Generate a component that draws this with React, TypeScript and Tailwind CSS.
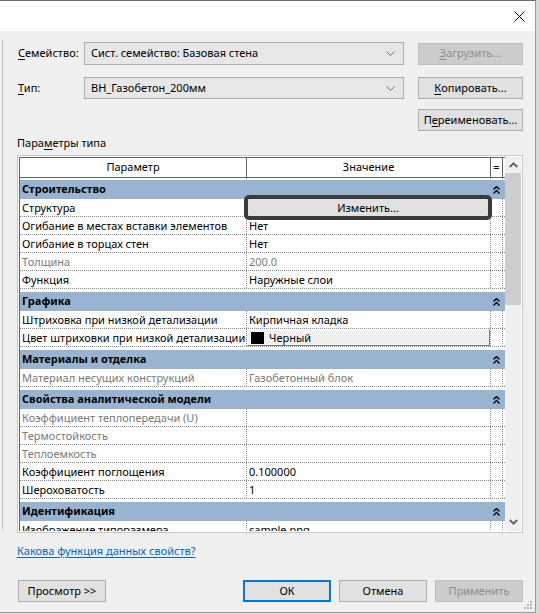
import React from "react";

type Row = { name: string; value?: string; muted?: boolean; kind?: "edit" | "color" };
type Section = { title: string; rows: Row[] };

const sections: Section[] = [
  {
    title: "Строительство",
    rows: [
      { name: "Структура", kind: "edit" },
      { name: "Огибание в местах вставки элементов", value: "Нет" },
      { name: "Огибание в торцах стен", value: "Нет" },
      { name: "Толщина", value: "200.0", muted: true },
      { name: "Функция", value: "Наружные слои" },
    ],
  },
  {
    title: "Графика",
    rows: [
      { name: "Штриховка при низкой детализации", value: "Кирпичная кладка" },
      { name: "Цвет штриховки при низкой детализации", value: "Черный", kind: "color" },
    ],
  },
  {
    title: "Материалы и отделка",
    rows: [{ name: "Материал несущих конструкций", value: "Газобетонный блок", muted: true }],
  },
  {
    title: "Свойства аналитической модели",
    rows: [
      { name: "Коэффициент теплопередачи (U)", muted: true },
      { name: "Термостойкость", muted: true },
      { name: "Теплоемкость", muted: true },
      { name: "Коэффициент поглощения", value: "0.100000" },
      { name: "Шероховатость", value: "1" },
    ],
  },
  {
    title: "Идентификация",
    rows: [
      { name: "Изображение типоразмера", value: "sample.png" },
      { name: "Комментарии к типоразмеру", value: "" },
    ],
  },
];

function ChevronDown() {
  return (
    <svg width="9" height="5" viewBox="0 0 9 5">
      <path d="M0.5 0.5 L4.5 4.5 L8.5 0.5" fill="none" stroke="#6a6a6a" strokeWidth="1" />
    </svg>
  );
}

function CollapseIcon() {
  return (
    <svg width="7" height="8" viewBox="0 0 7 8">
      <path d="M0.5 3.5 L3.5 0.5 L6.5 3.5" fill="none" stroke="#000" strokeWidth="1.4" />
      <path d="M0.5 7.5 L3.5 4.5 L6.5 7.5" fill="none" stroke="#000" strokeWidth="1.4" />
    </svg>
  );
}

function ScrollArrow({ up }: { up?: boolean }) {
  return (
    <svg width="9" height="6" viewBox="0 0 9 6">
      <path
        d={up ? "M0.8 5 L4.5 1.3 L8.2 5" : "M0.8 1 L4.5 4.7 L8.2 1"}
        fill="none"
        stroke="#606060"
        strokeWidth="1.8"
      />
    </svg>
  );
}

function Button({
  children,
  className = "",
  disabled,
  primary,
}: {
  children: React.ReactNode;
  className?: string;
  disabled?: boolean;
  primary?: boolean;
}) {
  const look = disabled
    ? "bg-[#cccccc] border border-[#bfbfbf] text-[#8c8c8c]"
    : primary
      ? "bg-[#e1e1e1] border-2 border-[#0078d7]"
      : "bg-[#e1e1e1] border border-[#adadad]";
  return (
    <div className={`h-[22px] flex items-center justify-center ${look} ${className}`}>{children}</div>
  );
}

function Select({ value }: { value: string }) {
  return (
    <div className="w-[320px] h-full flex items-center justify-between pl-[6px] pr-[8px] bg-[#e7e7e7] border border-[#acacac]">
      <span>{value}</span>
      <ChevronDown />
    </div>
  );
}

function DataRow({ row }: { row: Row }) {
  const tone = row.muted ? "text-[#7a7a7a]" : "text-black";
  return (
    <div className="flex h-[18px] border-b border-dotted border-[#8a8a8a]">
      <div className={`w-[227px] pl-[2px] border-r border-dotted border-[#8a8a8a] whitespace-nowrap overflow-hidden leading-[17px] ${tone}`}>
        {row.name}
      </div>
      <div className={`relative w-[244px] border-r border-dotted border-[#8a8a8a] leading-[17px] ${tone}`}>
        {row.kind === "edit" ? (
          <div className="absolute -left-[3px] -right-[2px] -top-[4px] -bottom-[4px] z-10 rounded-[5px] border-[4px] border-[#3b3b3b] bg-[#e1e1e1] flex items-center justify-center text-black">
            Изменить...
          </div>
        ) : row.kind === "color" ? (
          <div className="h-full flex items-center gap-[5px] pl-[3px] bg-[#f0f0f0] border border-[#7c7c7c] border-t-white border-l-white">
            <div className="w-[13px] h-[12px] bg-black" />
            <span>{row.value}</span>
          </div>
        ) : (
          <div className="pl-[2px] whitespace-nowrap overflow-hidden">{row.value}</div>
        )}
      </div>
      <div className="w-[12px] border-r border-dotted border-[#8a8a8a]" />
    </div>
  );
}

function SectionHeader({ title, first }: { title: string; first?: boolean }) {
  return (
    <div
      className={`flex items-center justify-between h-[19px] w-[485px] bg-[#99b4d1] pl-[2px] pr-[5px] font-bold ${
        first ? "mt-[2px]" : "mt-[3px]"
      }`}
    >
      <span>{title}</span>
      <CollapseIcon />
    </div>
  );
}

export default function App() {
  return (
    <div className="w-[539px] h-[614px] bg-[#dadada] font-['Noto_Sans',sans-serif] text-[11px] text-black">
      <div className="relative w-[536px] h-[613px] flex flex-col bg-[#f0f0f0] border-t border-[#6d6d62] border-r border-b border-r-[#9a9a9a] border-b-[#9a9a9a]">
        {/* title bar */}
        <div className="h-[30px] bg-white flex items-center justify-end pr-[10px]">
          <svg width="11" height="11" viewBox="0 0 11 11">
            <path d="M0.5 0.5 L10.5 10.5 M10.5 0.5 L0.5 10.5" stroke="#000" strokeWidth="1" />
          </svg>
        </div>

        <div className="flex flex-1">
          <div className="w-px ml-[2px] mt-[9px] h-[491px] bg-[#c6c6c6]" />
          <div className="flex-1 flex flex-col pl-[14px] pr-[12px] pt-[11px]">
            {/* family */}
            <div className="flex items-center h-[23px]">
              <div className="w-[67px] pl-[1px]">
                <span className="underline underline-offset-2">С</span>емейство:
              </div>
              <Select value="Сист. семейство: Базовая стена" />
              <Button disabled className="ml-[14px] w-[105px]">
                <span className="underline underline-offset-2">З</span>агрузить...
              </Button>
            </div>

            {/* type */}
            <div className="flex items-center h-[22px] mt-[12px]">
              <div className="w-[67px] pl-[1px]">
                <span className="underline underline-offset-2">Т</span>ип:
              </div>
              <Select value="ВН_Газобетон_200мм" />
              <Button className="ml-[14px] w-[105px]">
                <span className="underline underline-offset-2">К</span>опировать...
              </Button>
            </div>

            <div className="flex justify-end mt-[10px]">
              <Button className="w-[105px]">
                П<span className="underline underline-offset-2">е</span>реименовать...
              </Button>
            </div>

            <div className="mt-[4px] h-[16px] leading-[16px]">
              Пара<span className="underline underline-offset-2">м</span>етры типа
            </div>

            {/* parameter grid */}
            <div className="mt-[4px] w-[506px] h-[378px] border border-[#c8c8c8] p-px bg-white flex overflow-hidden">
              <div className="w-[486px] h-full overflow-hidden border-l border-[#646464]">
                <div className="flex h-[21px] border-t border-b border-[#646464]">
                  <div className="w-[227px] border-r border-[#646464] flex items-center justify-center">Параметр</div>
                  <div className="w-[244px] border-r border-[#646464] flex items-center justify-center">Значение</div>
                  <div className="w-[12px] border-r border-[#646464] flex items-center justify-center">=</div>
                </div>
                {sections.map((s, i) => (
                  <div key={s.title}>
                    <SectionHeader title={s.title} first={i === 0} />
                    {s.rows.map((r) => (
                      <DataRow key={r.name} row={r} />
                    ))}
                  </div>
                ))}
              </div>
              <div className="w-[16px] h-full bg-[#f0f0f0] flex flex-col items-center">
                <div className="h-[16px] flex items-center justify-center">
                  <ScrollArrow up />
                </div>
                <div className="w-full h-[132px] bg-[#cdcdcd]" />
                <div className="flex-1" />
                <div className="h-[16px] mb-[1px] flex items-center justify-center">
                  <ScrollArrow />
                </div>
              </div>
            </div>

            <div className="mt-[10px] h-[16px] leading-[16px]">
              <span className="text-[#0066cc] underline underline-offset-2">Какова функция данных свойств?</span>
            </div>

            <div className="mt-[21px] flex items-center">
              <Button className="w-[88px] ml-px">Просмотр &gt;&gt;</Button>
              <Button primary className="w-[88px] ml-auto">
                ОК
              </Button>
              <Button className="w-[88px] ml-[8px]">Отмена</Button>
              <Button disabled className="w-[88px] ml-[8px]">
                Применить
              </Button>
            </div>
          </div>
        </div>

        {/* resize grip */}
        <svg width="9" height="9" viewBox="0 0 9 9" className="absolute right-[2px] bottom-[2px]">
          <rect x="6" y="0" width="2" height="2" fill="#b8b8b8" />
          <rect x="3" y="3" width="2" height="2" fill="#b8b8b8" />
          <rect x="6" y="3" width="2" height="2" fill="#b8b8b8" />
          <rect x="0" y="6" width="2" height="2" fill="#b8b8b8" />
          <rect x="3" y="6" width="2" height="2" fill="#b8b8b8" />
          <rect x="6" y="6" width="2" height="2" fill="#b8b8b8" />
        </svg>
      </div>
    </div>
  );
}
